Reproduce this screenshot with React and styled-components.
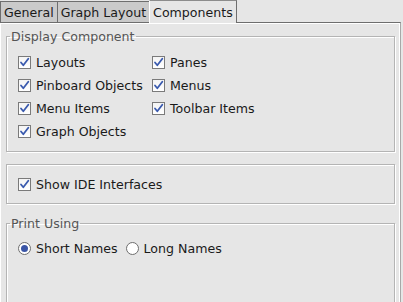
import styled, { createGlobalStyle } from "styled-components";

const GlobalStyle = createGlobalStyle`
  html, body {
    margin: 0;
    padding: 0;
    background: #e6e6e6;
  }
  * {
    box-sizing: border-box;
  }
`;

const Window = styled.div`
  width: 403px;
  height: 302px;
  overflow: hidden;
  background: #e6e6e6;
  font-family: "DejaVu Sans", "Liberation Sans", sans-serif;
  font-size: 12.6px;
  color: #1a1a1a;
  display: flex;
  flex-direction: column;
`;

const TabBar = styled.div`
  display: flex;
  height: 22px;
  flex: none;
  align-items: flex-end;
  position: relative;
  z-index: 1;
`;

const Tab = styled.div`
  height: ${(p) => (p.$active ? "23px" : "21px")};
  margin-bottom: ${(p) => (p.$active ? "-1px" : "0")};
  padding: 0 3px;
  display: flex;
  align-items: center;
  background: ${(p) => (p.$active ? "#e6e6e6" : "#cacaca")};
  border-top: 1px solid ${(p) => (p.$active ? "#8c8c8c" : "#6e6e6e")};
  border-left: 1px solid ${(p) => (p.$active ? "#ffffff" : "#6e6e6e")};
  border-right: 1px solid #6e6e6e;
  margin-left: -1px;
  white-space: nowrap;
  &:first-child {
    margin-left: 0;
  }
`;

const Panel = styled.div`
  flex: none;
  height: 340px;
  width: 401px;
  border-top: 1px solid #6e6e6e;
  border-right: 1px solid #a8a8a8;
  box-shadow: inset 1px 1px 0 #ffffff, inset -1px 0 0 #ffffff;
  padding: 6px 5px 0 6px;
  display: flex;
  flex-direction: column;
  gap: 12px;
`;

const GroupBox = styled.fieldset`
  margin: 0;
  padding: 0;
  min-width: 0;
  border: 1px solid #b4b4b4;
  box-shadow: inset 1px 1px 0 #ffffff, 1px 1px 0 #ffffff;
  flex: ${(p) => (p.$grow ? "1 0 auto" : "0 0 auto")};
`;

const Legend = styled.legend`
  margin-left: 3px;
  padding: 0 1px;
  line-height: 15px;
  color: #555555;
`;

const Body = styled.div`
  padding: ${(p) => p.$pad || "7px 0 8px 11px"};
`;

const CheckGrid = styled.div`
  display: grid;
  grid-template-columns: 134px auto;
  grid-auto-rows: 23px;
`;

const Option = styled.label`
  display: flex;
  align-items: center;
  height: 23px;
  gap: 5px;
  white-space: nowrap;
`;

const Box = styled.span`
  width: 13px;
  height: 13px;
  flex: none;
  border: 1px solid #7a7a7a;
  background: linear-gradient(#f4f4f4, #ffffff);
  display: flex;
  align-items: center;
  justify-content: center;
`;

const Circle = styled.span`
  width: 13px;
  height: 13px;
  flex: none;
  border-radius: 50%;
  border: 1px solid #6e6e6e;
  background: #ffffff;
  display: flex;
  align-items: center;
  justify-content: center;
  &::after {
    content: "";
    width: 7px;
    height: 7px;
    border-radius: 50%;
    background: ${(p) => (p.$on ? "#3a55a6" : "transparent")};
  }
`;

const RadioRow = styled.div`
  display: flex;
  align-items: center;
  gap: 8px;
`;

const Check = ({ label }) => (
  <Option>
    <Box>
      <svg width="11" height="11" viewBox="0 0 11 11">
        <path
          d="M2 5.5 L4.3 8.3 L9.3 1.8"
          fill="none"
          stroke="#3a5aae"
          strokeWidth="1.8"
          strokeLinecap="round"
          strokeLinejoin="round"
        />
      </svg>
    </Box>
    {label}
  </Option>
);

const Radio = ({ label, on }) => (
  <Option>
    <Circle $on={on} />
    {label}
  </Option>
);

export default function App() {
  return (
    <>
      <GlobalStyle />
      <Window>
        <TabBar>
          <Tab>General</Tab>
          <Tab>Graph Layout</Tab>
          <Tab $active>Components</Tab>
        </TabBar>
        <Panel>
          <GroupBox>
            <Legend>Display Component</Legend>
            <Body>
              <CheckGrid>
                <Check label="Layouts" />
                <Check label="Panes" />
                <Check label="Pinboard Objects" />
                <Check label="Menus" />
                <Check label="Menu Items" />
                <Check label="Toolbar Items" />
                <Check label="Graph Objects" />
              </CheckGrid>
            </Body>
          </GroupBox>
          <GroupBox>
            <Body $pad="8px 0 7px 11px">
              <Check label="Show IDE Interfaces" />
            </Body>
          </GroupBox>
          <GroupBox $grow>
            <Legend>Print Using</Legend>
            <Body $pad="6px 0 0 11px">
              <RadioRow>
                <Radio label="Short Names" on />
                <Radio label="Long Names" />
              </RadioRow>
            </Body>
          </GroupBox>
        </Panel>
      </Window>
    </>
  );
}
